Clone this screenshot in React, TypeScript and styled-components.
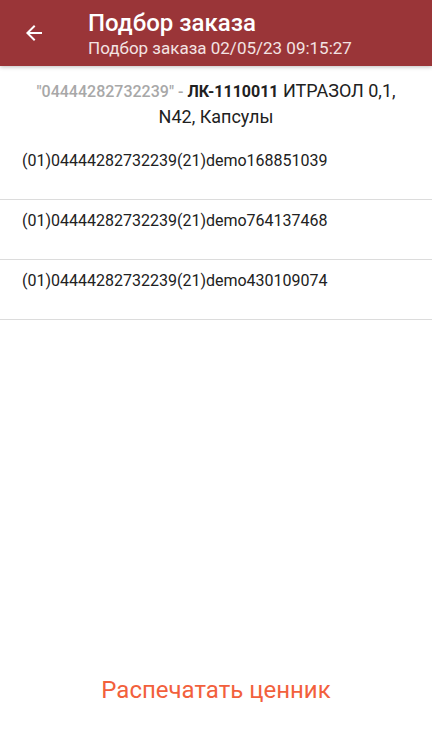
import React from 'react'
import styled, { createGlobalStyle } from 'styled-components'

const GlobalStyle = createGlobalStyle`
  html, body {
    margin: 0;
    padding: 0;
    background: #ffffff;
  }
  #root {
    height: 100vh;
  }
  * {
    box-sizing: border-box;
  }
`

const codes = [
  '(01)04444282732239(21)demo168851039',
  '(01)04444282732239(21)demo764137468',
  '(01)04444282732239(21)demo430109074',
]

const App = () => {
  return (
    <Screen>
      <GlobalStyle />
      <TopBar>
        <BackButton aria-label="back">
          <svg width="24" height="24" viewBox="0 0 24 24">
            <path d="M20 11H7.83l5.59-5.59L12 4l-8 8 8 8 1.41-1.41L7.83 13H20v-2z" fill="#ffffff" />
          </svg>
        </BackButton>
        <Titles>
          <Title>Подбор заказа</Title>
          <Subtitle>Подбор заказа 02/05/23 09:15:27</Subtitle>
        </Titles>
      </TopBar>

      <Product>
        <Barcode>"04444282732239" - </Barcode>
        <Article>ЛК-1110011</Article> ИТРАЗОЛ 0,1, N42, Капсулы
      </Product>

      <CodeList>
        {codes.map((code) => (
          <CodeRow key={code}>{code}</CodeRow>
        ))}
      </CodeList>

      <Footer>
        <PrintButton>Распечатать ценник</PrintButton>
      </Footer>
    </Screen>
  )
}

export default App

const Screen = styled.div`
  height: 100%;
  display: flex;
  flex-direction: column;
  font-family: Roboto, 'Noto Sans', sans-serif;
  color: #212121;
`

const TopBar = styled.header`
  height: 66px;
  flex-shrink: 0;
  display: flex;
  align-items: center;
  background: #9a3538;
  box-shadow: 0 1px 4px rgba(0, 0, 0, 0.25);
  position: relative;
  z-index: 1;
`

const BackButton = styled.button`
  width: 68px;
  height: 66px;
  border: none;
  background: transparent;
  display: flex;
  align-items: center;
  justify-content: flex-start;
  padding: 0 0 0 22px;

  svg {
    display: block;
  }
`

const Titles = styled.div`
  display: flex;
  flex-direction: column;
  margin-left: 20px;
  padding-top: 2px;
  color: #ffffff;
`

const Title = styled.div`
  font-size: 24px;
  font-weight: 500;
  line-height: 28px;
`

const Subtitle = styled.div`
  font-size: 17px;
  line-height: 22px;
  color: #f3e3e3;
`

const Product = styled.div`
  padding: 12px 20px 11px;
  text-align: center;
  font-size: 18px;
  line-height: 25px;
  color: #212121;
`

const Barcode = styled.span`
  color: #a8a8a8;
  font-weight: 500;
  font-size: 16px;
`

const Article = styled.span`
  font-weight: 700;
  font-size: 16px;
`

const CodeList = styled.div`
  display: flex;
  flex-direction: column;
`

const CodeRow = styled.div`
  height: 60px;
  padding: 11px 22px 0;
  font-size: 16px;
  line-height: 20px;
  color: #212121;
  border-bottom: 1px solid #dcdcdc;
`

const Footer = styled.div`
  margin-top: auto;
  display: flex;
  justify-content: center;
  padding-bottom: 35px;
`

const PrintButton = styled.button`
  border: none;
  background: transparent;
  font-family: Roboto, 'Noto Sans', sans-serif;
  font-size: 24px;
  color: #f2603c;
  padding: 0;
  line-height: 28px;
`
